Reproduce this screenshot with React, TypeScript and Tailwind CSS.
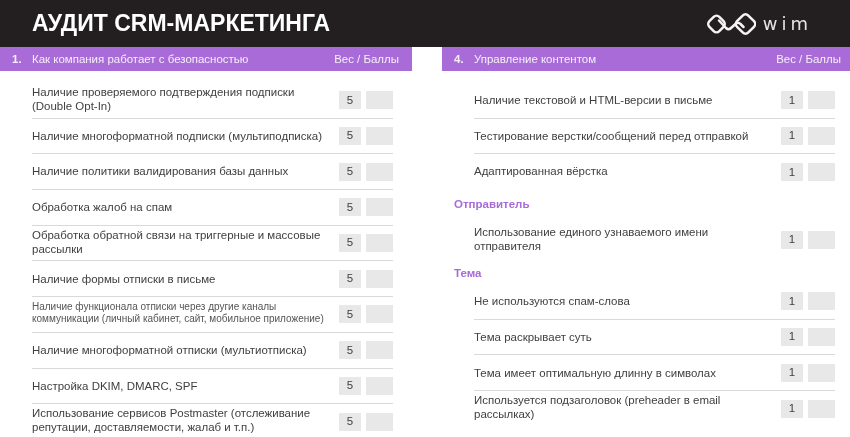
const Wt = "font-['Liberation_Sans',Arial,sans-serif]";

function Logo() {
  return (
    <div className="flex items-center gap-[7px]">
      <svg width="50" height="26" viewBox="0 0 50 26" fill="none" stroke="#f4f4f4" strokeWidth="2.5" strokeLinecap="round" strokeLinejoin="round">
        <rect x="3.5" y="6" width="14" height="14" rx="4" transform="rotate(45 10.5 13)" />
        <rect x="31.5" y="5" width="16" height="16" rx="4" transform="rotate(45 39.5 13)" />
        <path d="M13 9.5 L20 17 Q22.5 19.5 25 17 L29.5 13 Q32 10.5 34.5 13 L37.5 16" />
      </svg>
      <span className="font-['DejaVu_Sans',sans-serif] text-[18px] leading-none tracking-[4px] text-[#e4e4e4]">wim</span>
    </div>
  );
}

function Row({ text, v, small, last, up = "", h = "h-[35.7px]" }: { text: React.ReactNode; v: string; small?: boolean; last?: boolean; up?: string; h?: string }) {
  return (
    <div className={`flex items-center justify-between ${h} ${last ? "" : "border-b border-[#d9d9d9]"}`}>
      <div className={`w-[300px] ${up} ${small ? "text-[10px] leading-[12px] text-[#555555]" : "text-[11.48px] leading-[14px] text-[#404040]"}`}>{text}</div>
      <div className="flex gap-[5px]">
        <div className="flex h-[18px] w-[22px] items-center justify-center bg-[#e8e8e8] text-[11.5px] text-[#404040]">{v}</div>
        <div className="h-[18px] w-[27px] bg-[#e8e8e8]" />
      </div>
    </div>
  );
}

function Bar({ n, title, className }: { n: string; title: string; className: string }) {
  return (
    <div className={`flex h-[24px] items-center bg-[#a86bd8] pt-[2px] text-[11.48px] text-[#f6effb] ${className}`}>
      <span className="w-[20px] font-bold">{n}</span>
      <span className="flex-1">{title}</span>
      <span>Вес / Баллы</span>
    </div>
  );
}

function Label({ children, className }: { children: React.ReactNode; className: string }) {
  return <div className={`-ml-[20px] flex items-center pt-[2px] text-[11.5px] font-bold text-[#a86bd8] ${className}`}>{children}</div>;
}

export default function App() {
  return (
    <div className={`h-[437px] w-[850px] overflow-hidden bg-white blur-[0.35px] ${Wt}`}>
      <header className="flex h-[47px] items-center justify-between bg-[#231f20] pl-[32px] pr-[38px]">
        <h1 className="text-[23px] font-bold leading-none text-white">АУДИТ CRM-МАРКЕТИНГА</h1>
        <Logo />
      </header>
      <div className="flex justify-between">
        <section className="w-[412px]">
          <Bar n="1." title="Как компания работает с безопасностью" className="pl-[12px] pr-[13px]" />
          <div className="pl-[32px] pr-[19px] pt-[12px]">
            <Row v="5" up="pb-[2px]" text={<>Наличие проверяемого подтверждения подписки<br />(Double Opt-In)</>} />
            <Row v="5" text="Наличие многоформатной подписки (мультиподписка)" />
            <Row v="5" up="pb-[2px]" text="Наличие политики валидирования базы данных" />
            <Row v="5" text="Обработка жалоб на спам" />
            <Row v="5" up="pb-[2px]" text={<>Обработка обратной связи на триггерные и массовые рассылки</>} />
            <Row v="5" text="Наличие формы отписки в письме" />
            <Row v="5" small up="pb-[2px]" text={<>Наличие функционала отписки через другие каналы<br />коммуникации (личный кабинет, сайт, мобильное приложение)</>} />
            <Row v="5" text="Наличие многоформатной отписки (мультиотписка)" />
            <Row v="5" text="Настройка DKIM, DMARC, SPF" />
            <Row v="5" last up="pb-[4px]" text={<>Использование сервисов Postmaster (отслеживание<br />репутации, доставляемости, жалаб и т.п.)</>} />
          </div>
        </section>
        <section className="w-[408px]">
          <Bar n="4." title="Управление контентом" className="pl-[12px] pr-[9px]" />
          <div className="pl-[32px] pr-[15px] pt-[12px]">
            <Row v="1" text="Наличие текстовой и HTML-версии в письме" />
            <Row v="1" text="Тестирование верстки/сообщений перед отправкой" />
            <Row v="1" last up="pb-[2px]" text="Адаптированная вёрстка" />
            <Label className="h-[28px]">Отправитель</Label>
            <Row v="1" last up="pb-[2px]" h="h-[44px]" text={<>Использование единого узнаваемого имени<br />отправителя</>} />
            <Label className="h-[22px]">Тема</Label>
            <Row v="1" text="Не используются спам-слова" />
            <Row v="1" text="Тема раскрывает суть" />
            <Row v="1" text="Тема имеет оптимальную длинну в символах" />
            <Row v="1" last up="pb-[4px]" text={<>Используется подзаголовок (preheader в email<br />рассылках)</>} />
          </div>
        </section>
      </div>
    </div>
  );
}
